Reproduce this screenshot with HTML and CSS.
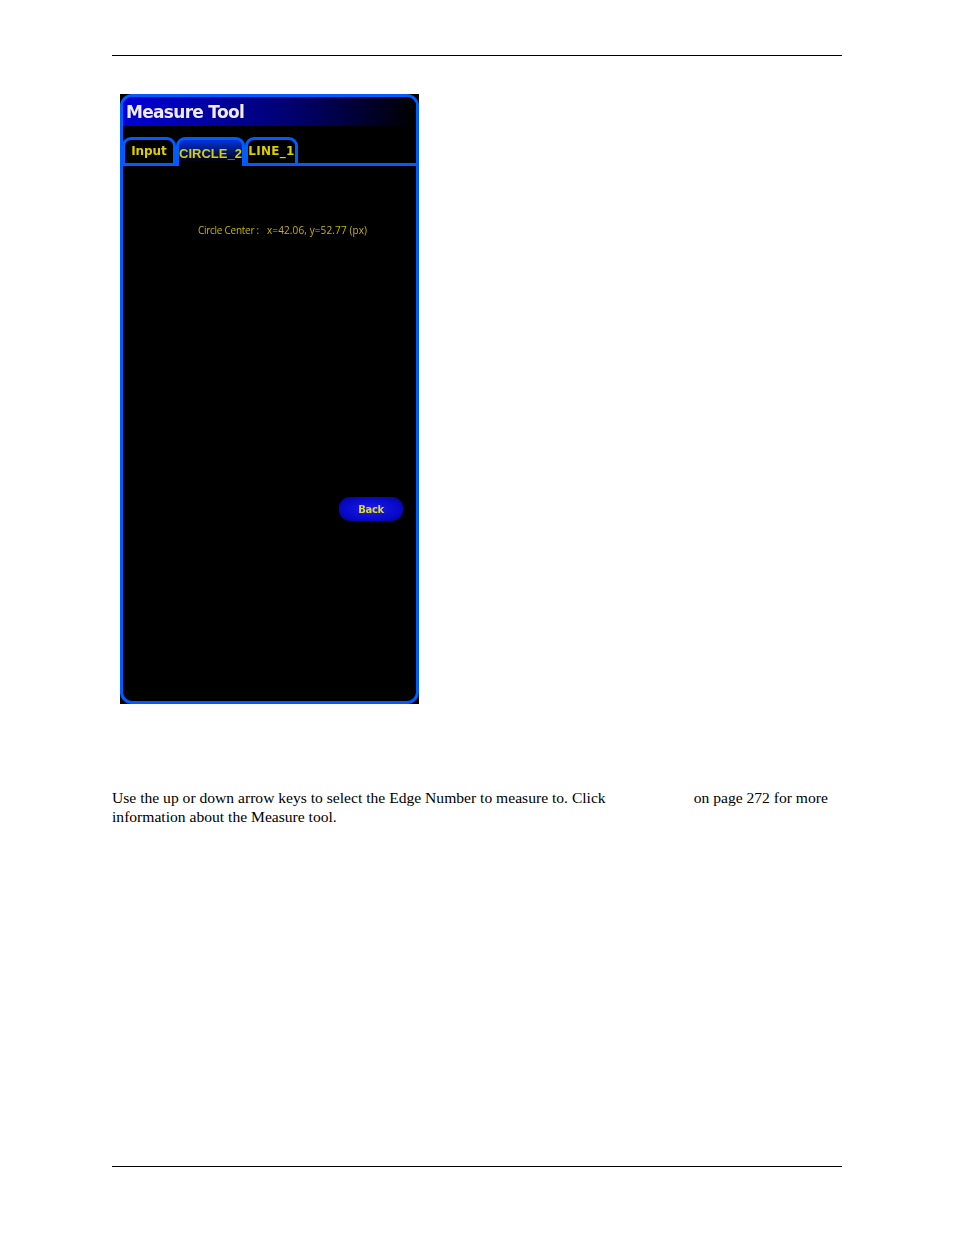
FILE: index.html
```html
<!DOCTYPE html>
<html lang="en">
<head>
    <meta charset="UTF-8">
    <title>Measure Tool</title>
    <link rel="stylesheet" href="styles.css">
</head>
<body>
    <div class="page">
        <hr class="rule">
        <div class="shot">
            <div class="window">
                <div class="title">Measure Tool</div>
                <div class="tabs">
                    <div class="tab tab-input">Input</div>
                    <div class="tab active">CIRCLE_2</div>
                    <div class="tab tab-line">LINE_1</div>
                </div>
                <div class="panel">
                    <p class="result"><span class="result-label">Circle Center :</span><span class="result-value">x=42.06, y=52.77 (px)</span></p>
                    <div class="actions"><button class="back">Back</button></div>
                </div>
            </div>
        </div>
        <div class="copy">
            <p class="line"><span>Use the up or down arrow keys to select the Edge Number to measure to. Click</span><span class="after-link">on page 272 for more</span></p>
            <p class="line">information about the Measure tool.</p>
        </div>
        <hr class="rule foot">
    </div>
</body>
</html>
```

FILE: styles.css
```css
html, body {margin: 0; background: #fff;}
.page {width: 730px; height: 1235px; margin-left: 112px; padding-top: 55px; box-sizing: border-box;}
.rule {margin: 0; border: 0; border-top: 1px solid #000;}
.foot {margin-top: 340px;}

.shot {width: 299px; height: 610px; margin: 38px 0 0 8px; background: #000; filter: blur(0.5px);}
.window {height: 100%; box-sizing: border-box; border: 3px solid #005cff; border-radius: 12px; overflow: hidden; display: flex; flex-direction: column;}
.title {height: 29px; padding-left: 3px; background: linear-gradient(90deg, #0000d8, #00006a 60%, #000 100%); color: #f0eaf5; font: bold 17px/30px "DejaVu Sans", sans-serif; letter-spacing: -0.7px;}

.tabs {display: flex; height: 40px; box-sizing: border-box; padding-top: 11px; border-bottom: 3px solid #005cff; font-family: "DejaVu Sans", sans-serif;}
.tab {box-sizing: border-box; border: 3px solid #005cff; border-radius: 9px 9px 0 0; color: #dccc00; font-size: 12px; font-weight: bold; text-align: center; white-space: nowrap;}
.tab-input {width: 54px; height: 29px; margin-left: -1px; line-height: 23px; background: #000; letter-spacing: -0.05px;}
.tab-line {width: 53px; height: 29px; line-height: 23px; background: #000; letter-spacing: 0.3px;}
.tab.active {width: 69px; height: 29px; border-bottom: 0; background: linear-gradient(#0033e0, #000 85%); font-family: "Liberation Sans", sans-serif; font-size: 13px; line-height: 27px;}

.panel {flex: 1; padding-top: 58px;}
.result {margin: 0 0 0 75px; color: #c8b400; font: 10px/13px "Open Sans", sans-serif; white-space: nowrap;}
.result-label {letter-spacing: -0.27px;}
.result-value {margin-left: 8px; letter-spacing: 0.12px;}
.actions {display: flex; justify-content: flex-end; margin-top: 260px; padding-right: 13px;}
.back {width: 64px; height: 24px; padding: 0; border: 0; border-radius: 11px; background: radial-gradient(ellipse at center, #1c1ce8, #0808c8 65%, #040480); color: #dcdc30; font: bold 10px/26px "DejaVu Sans", sans-serif; letter-spacing: -0.3px;}

.copy {margin-top: 84px; color: #000; font: 15.6px/19px "Liberation Serif", serif;}
.line {margin: 0; white-space: nowrap;}
.after-link {margin-left: 88px;}
```
